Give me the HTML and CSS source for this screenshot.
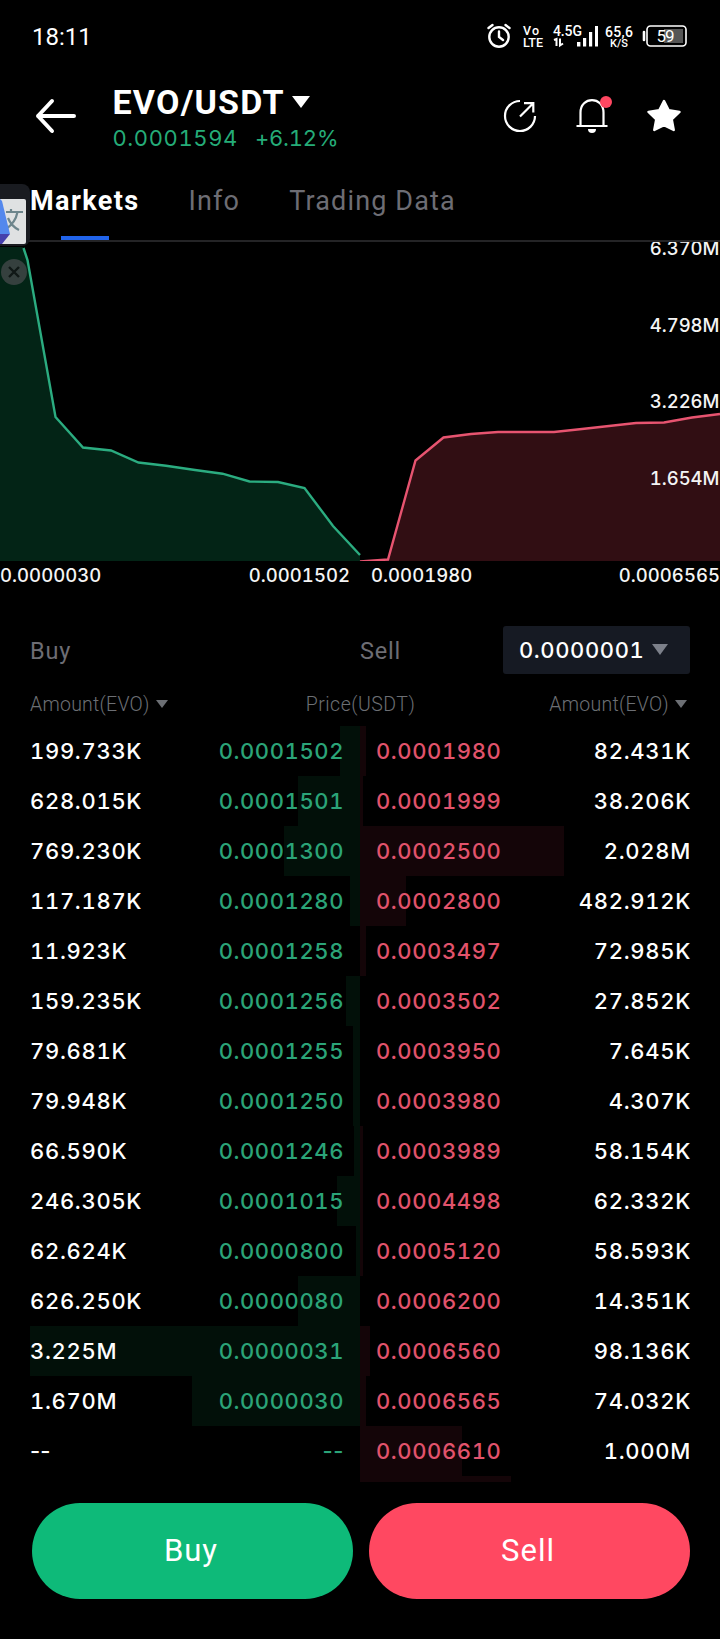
FILE: index.html
```
<!DOCTYPE html>
<html lang="en">
<head>
    <meta charset="UTF-8">
    <title>EVO/USDT</title>
    <link rel="stylesheet" href="styles.css">
</head>
<body>
<div class="status-bar">
    <span class="time">18:11</span>
    <svg class="status-icons" width="208" height="32" viewBox="484 20 208 32">
        <g fill="none" stroke="#fff" stroke-width="2.4" stroke-linecap="round">
            <circle cx="499" cy="37" r="9.7"/>
            <path d="M499 31.500V37l4 3M488.500 28l4-3M509.500 28l-4-3"/>
            <path d="M644 32v8" stroke-width="2.6"/>
            <rect x="647" y="26" width="39" height="20" rx="3.5" stroke-width="1.6"/>
        </g>
        <rect x="664" y="29" width="19" height="14" fill="#555"/>
        <path d="M577 42h3.400v4.500H577zM583 38h3.200v8.500H583zM589 32h3.200v14.500H589zM595 26h3v20.500h-3z" fill="#fff"/>
        <path d="M554 40l2.500-1v7M560 38.500v7l3-2" fill="none" stroke="#fff" stroke-width="2"/>
        <g fill="#fff" class="status-text">
            <text x="523" y="34.500" textLength="16" class="small">Vo</text>
            <text x="523" y="47" textLength="20" lengthAdjust="spacingAndGlyphs" class="small">LTE</text>
            <text x="553" y="36" textLength="29">4.5G</text>
            <text x="605" y="37" textLength="28">65,6</text>
            <text x="610" y="47" textLength="18" class="tiny">K/S</text>
            <text x="656.500" y="42" textLength="18" class="battery">59</text>
        </g>
    </svg>
</div>

<div class="header">
    <svg class="back" width="44" height="40" viewBox="0 0 44 40"><path d="M18 5L4 20 18 35M4 20h36" fill="none" stroke="#fff" stroke-width="4" stroke-linecap="round" stroke-linejoin="round"/></svg>
    <div class="pair">
        <div class="pair-name">EVO/USDT <svg width="18" height="12" viewBox="0 0 18 12"><path d="M0 0h18L9 12z" fill="#fff"/></svg></div>
        <div class="pair-price"><span>0.0001594</span><span>+6.12%</span></div>
    </div>
    <div class="actions">
        <svg width="40" height="40" viewBox="0 0 40 40" fill="none" stroke="#fff" stroke-width="2.2"><path d="M20 5A15 15 0 1 0 35 20M20 20.500L33 7.500M24 7.200h9.300v9.300"/></svg>
        <svg width="40" height="40" viewBox="0 0 40 40"><path d="M8.500 30V16.500C8.500 0 31.500 0 31.500 16.500V30M4.500 30h31" fill="none" stroke="#fff" stroke-width="2.200"/><path d="M16 33h8a4 4 0 0 1-8 0z" fill="#fff"/><circle cx="34" cy="6" r="6" fill="#ff4761"/></svg>
        <svg width="40" height="40" viewBox="0 0 40 40"><path d="M20 5l4.700 9.300 10.800 1.600-7.800 7.400 2 10.700L20 29.200l-9.700 4.800 2-10.700-7.800-7.400 10.800-1.600z" fill="#fff" stroke="#fff" stroke-width="2.500" stroke-linejoin="round"/></svg>
    </div>
</div>

<div class="tabs">
    <span class="tab active">Markets</span>
    <span class="tab">Info</span>
    <span class="tab">Trading Data</span>
</div>

<svg class="chart" width="720" height="319" viewBox="0 0 720 319">
    <path class="bid-area" d="M0 5H23L27.500 18 55.500 175 83 205.500 111 208.500 138.500 220.500 166 223.700 195 228 222.500 231.700 249.500 239.500 278 240 304.500 246 333 284 360 313V319H0z"/>
    <path class="ask-area" d="M360 319L388 318 415.500 218.500 443.500 195.500 471 192 498 190H554L582 187 609 184 636 181 664 180.500 692 175.500 720 172V319z"/>
    <path class="bid-line" d="M23.500 6L27.500 18 55.500 175 83 205.500 111 208.500 138.500 220.500 166 223.700 195 228 222.500 231.700 249.500 239.500 278 240 304.500 246 333 284 360 313"/>
    <path class="ask-line" d="M360 319.500L388 317.500 415.500 218.500 443.500 195.500 471 192 498 190H554L582 187 609 184 636 181 664 180.500 692 175.500 720 172"/>
    <g class="chart-labels">
        <text x="719.500" y="13">6.370M</text>
        <text x="719.500" y="90">4.798M</text>
        <text x="719.500" y="166">3.226M</text>
        <text x="719.500" y="243">1.654M</text>
    </g>
</svg>
<div class="price-axis">
    <div><span>0.0000030</span><span>0.0001502</span></div>
    <div><span>0.0001980</span><span>0.0006565</span></div>
</div>

<div class="book-head">
    <span>Buy</span>
    <span>Sell</span>
    <div class="precision">0.0000001 <svg width="16" height="11" viewBox="0 0 16 11"><path d="M0 0h16L8 11z" fill="#7c808a"/></svg></div>
</div>
<div class="book-columns">
    <span>Amount(EVO)<svg width="12" height="8" viewBox="0 0 12 8"><path d="M0 0h12L6 8z"/></svg></span>
    <span class="price-title">Price(USDT)</span>
    <span>Amount(EVO)<svg width="12" height="8" viewBox="0 0 12 8"><path d="M0 0h12L6 8z"/></svg></span>
</div>
<div class="book" id="book"></div>

<div class="buttons">
    <button class="btn buy">Buy</button>
    <button class="btn sell">Sell</button>
</div>

<!-- floating translate button -->
<div class="translate">
    <svg width="30" height="62" viewBox="0 0 30 62">
        <path d="M0 0h22a8 8 0 0 1 8 8v46a8 8 0 0 1-8 8H0z" fill="#191b20"/>
        <path d="M0 15h24a2 2 0 0 1 2 2v41a2 2 0 0 1-2 2H0z" fill="#dfe1e2"/>
        <path d="M6 28h17M11 25v4M17.500 28C16 36 12 41 6 45M8 34c2 5 5 9 11 12" fill="none" stroke="#6d858c" stroke-width="2.200"/>
        <path d="M0 15L2 17 10 50H0z" fill="#5488ed"/>
        <path d="M0 50h10L2 60H0z" fill="#4540ac"/>
    </svg>
</div>
<div class="translate-close">
    <svg width="26" height="26" viewBox="0 0 26 26"><circle cx="13" cy="13" r="13" fill="#35403e"/><path d="M8 8l10 10M18 8L8 18" stroke="#101816" stroke-width="2.400"/></svg>
</div>

<script>
    // bid amount, bid price, bid depth, ask price, ask amount, ask depth
    const rows = [
        ['199.733K', '0.0001502', 20, '0.0001980', '82.431K', 6],
        ['628.015K', '0.0001501', 62, '0.0001999', '38.206K', 3],
        ['769.230K', '0.0001300', 76, '0.0002500', '2.028M', 204],
        ['117.187K', '0.0001280', 10, '0.0002800', '482.912K', 46],
        ['11.923K', '0.0001258', 0, '0.0003497', '72.985K', 6],
        ['159.235K', '0.0001256', 14, '0.0003502', '27.852K', 0],
        ['79.681K', '0.0001255', 7, '0.0003950', '7.645K', 0],
        ['79.948K', '0.0001250', 7, '0.0003980', '4.307K', 0],
        ['66.590K', '0.0001246', 6, '0.0003989', '58.154K', 3],
        ['246.305K', '0.0001015', 23, '0.0004498', '62.332K', 3],
        ['62.624K', '0.0000800', 4, '0.0005120', '58.593K', 3],
        ['626.250K', '0.0000080', 62, '0.0006200', '14.351K', 0],
        ['3.225M', '0.0000031', 330, '0.0006560', '98.136K', 10],
        ['1.670M', '0.0000030', 168, '0.0006565', '74.032K', 6],
        ['--', '--', 0, '0.0006610', '1.000M', 102],
        ['', '', 0, '', '', 151]
    ];
    const bar = width => width ? `<i class="bar" style="width: ${width}px"></i>` : '';
    document.getElementById('book').innerHTML = rows.map(r => `
        <div class="row">
            <div class="bid${r[0] === '--' ? ' empty' : ''}">${bar(r[2])}<span>${r[0]}</span><span class="green">${r[1]}</span></div>
            <div class="ask">${bar(r[5])}<span class="red">${r[3]}</span><span>${r[4]}</span></div>
        </div>`).join('');
</script>
</body>
</html>
```
FILE: styles.css
```
* {
    box-sizing: border-box;
}
body {
    margin: 0;
    width: 720px;
    height: 1639px;
    overflow: hidden;
    background-color: #000;
    color: #fff;
    font-family: Roboto, "Liberation Sans", sans-serif;
}
svg {
    flex-shrink: 0;
}
.status-bar {
    display: flex;
    justify-content: space-between;
    height: 72px;
    padding: 20px 28px 0 32px;
}
.time {
    font-size: 24px;
    line-height: 34px;
}
.status-text {
    font-size: 14px;
    font-weight: 500;
}
.status-text .small {
    font-size: 12.5px;
}
.status-text .tiny {
    font-size: 11px;
}
.status-text .battery {
    font-size: 17px;
    font-weight: 400;
}
.header {
    display: flex;
    height: 96px;
    padding: 0 36px 0 34px;
}
.back {
    margin-top: 24px;
}
.pair {
    margin-left: 34.5px;
    padding-top: 8px;
}
.pair-name {
    height: 44px;
    line-height: 44px;
    font-size: 34px;
    font-weight: 700;
    letter-spacing: 1.2px;
    white-space: nowrap;
}
.pair-name svg {
    vertical-align: 6px;
    margin-left: -1px;
}
.pair-price {
    display: flex;
    gap: 17px;
    line-height: 28px;
    font-family: Inter, sans-serif;
    font-size: 22px;
    letter-spacing: 0.6px;
    font-variant-numeric: tabular-nums;
    color: #25ac78;
}
.pair-price span + span {
    letter-spacing: -0.2px;
}
.actions {
    display: flex;
    gap: 32px;
    margin-left: auto;
    margin-top: 24px;
}
.tabs {
    display: flex;
    gap: 49px;
    height: 74px;
    padding-left: 30px;
    border-bottom: 2px solid #242426;
}
.tab {
    position: relative;
    line-height: 66px;
    font-size: 27px;
    letter-spacing: 1.15px;
    color: #6d6d74;
}
.tab.active {
    color: #fff;
    font-weight: 700;
    letter-spacing: 1.4px;
}
.tab.active::after {
    content: "";
    position: absolute;
    left: 31px;
    top: 68px;
    width: 48px;
    height: 4px;
    background-color: #2164eb;
}
.chart {
    display: block;
}
.bid-area {
    fill: #032416;
}
.ask-area {
    fill: #310e13;
}
.bid-line, .ask-line {
    fill: none;
    stroke-width: 2.4;
}
.bid-line {
    stroke: #2bac80;
}
.ask-line {
    stroke: #e75470;
}
.chart-labels {
    fill: #f4f4f4;
    font-family: Inter, sans-serif;
    font-size: 18.5px;
    font-weight: 500;
    text-anchor: end;
    font-variant-numeric: tabular-nums;
}
.price-axis {
    display: grid;
    grid-template-columns: 350px 349px;
    column-gap: 21px;
    height: 65px;
    font-family: Inter, sans-serif;
    font-size: 18.5px;
    font-weight: 500;
    line-height: 29px;
    letter-spacing: 0.05px;
    font-variant-numeric: tabular-nums;
    color: #f4f4f4;
}
.price-axis div {
    display: flex;
    justify-content: space-between;
}
.book-head {
    display: grid;
    grid-template-columns: 330px 143px 187px;
    grid-template-rows: 48px;
    height: 48px;
    margin: 0 30px;
    line-height: 51px;
    font-size: 23.5px;
    letter-spacing: 0.8px;
    color: #6d6d74;
}
.precision {
    padding-left: 16px;
    border-radius: 3px;
    background-color: #161a23;
    color: #fff;
    font-family: Inter, sans-serif;
    font-size: 22px;
    font-weight: 500;
    line-height: 48px;
    letter-spacing: 0.6px;
    font-variant-numeric: tabular-nums;
    white-space: nowrap;
}
.precision svg {
    vertical-align: 3px;
    margin-left: 1px;
}
.book-columns {
    display: flex;
    justify-content: space-between;
    height: 52px;
    padding: 0 33px 0 30px;
    line-height: 61px;
    font-size: 19.5px;
    font-weight: 300;
    letter-spacing: 0.25px;
    color: #6c6f74;
}
.book-columns svg {
    margin-left: 6px;
    vertical-align: 3px;
    fill: #6c6f74;
}
.price-title {
    letter-spacing: 0.5px;
    padding-left: 4px;
}
.book {
    height: 756px;
    overflow: hidden;
    font-family: Inter, sans-serif;
    font-size: 22px;
    font-weight: 500;
    line-height: 51px;
    letter-spacing: 0.7px;
    font-variant-numeric: tabular-nums;
}
.row {
    display: grid;
    grid-template-columns: 1fr 1fr;
    height: 50px;
}
.bid, .ask {
    position: relative;
    display: flex;
    justify-content: space-between;
}
.bid {
    padding: 0 16px 0 30px;
}
.bid.empty {
    font-variant-numeric: normal;
    letter-spacing: 0;
}
.ask {
    padding: 0 29px 0 16px;
}
.row span {
    position: relative;
}
/* depth behind the row */
.bar {
    position: absolute;
    top: 0;
    height: 50px;
}
.bid .bar {
    right: 0;
    background-color: #021009;
}
.ask .bar {
    left: 0;
    background-color: #140508;
}
.green {
    color: #2ba478;
}
.red {
    color: #e2536c;
}
.green, .red {
    letter-spacing: 0.6px;
}
.buttons {
    display: flex;
    gap: 16px;
    padding: 21px 30px 0 32px;
}
.btn {
    width: 321px;
    height: 96px;
    border: none;
    border-radius: 48px;
    padding: 0 3px 2px 0;
    color: #fff;
    font-family: Roboto, sans-serif;
    font-size: 31px;
    letter-spacing: 1px;
}
.buy {
    background-color: #0eba79;
}
.sell {
    background-color: #ff4861;
}
.translate {
    position: absolute;
    left: 0;
    top: 184px;
}
.translate-close {
    position: absolute;
    left: 1px;
    top: 259px;
}
```
